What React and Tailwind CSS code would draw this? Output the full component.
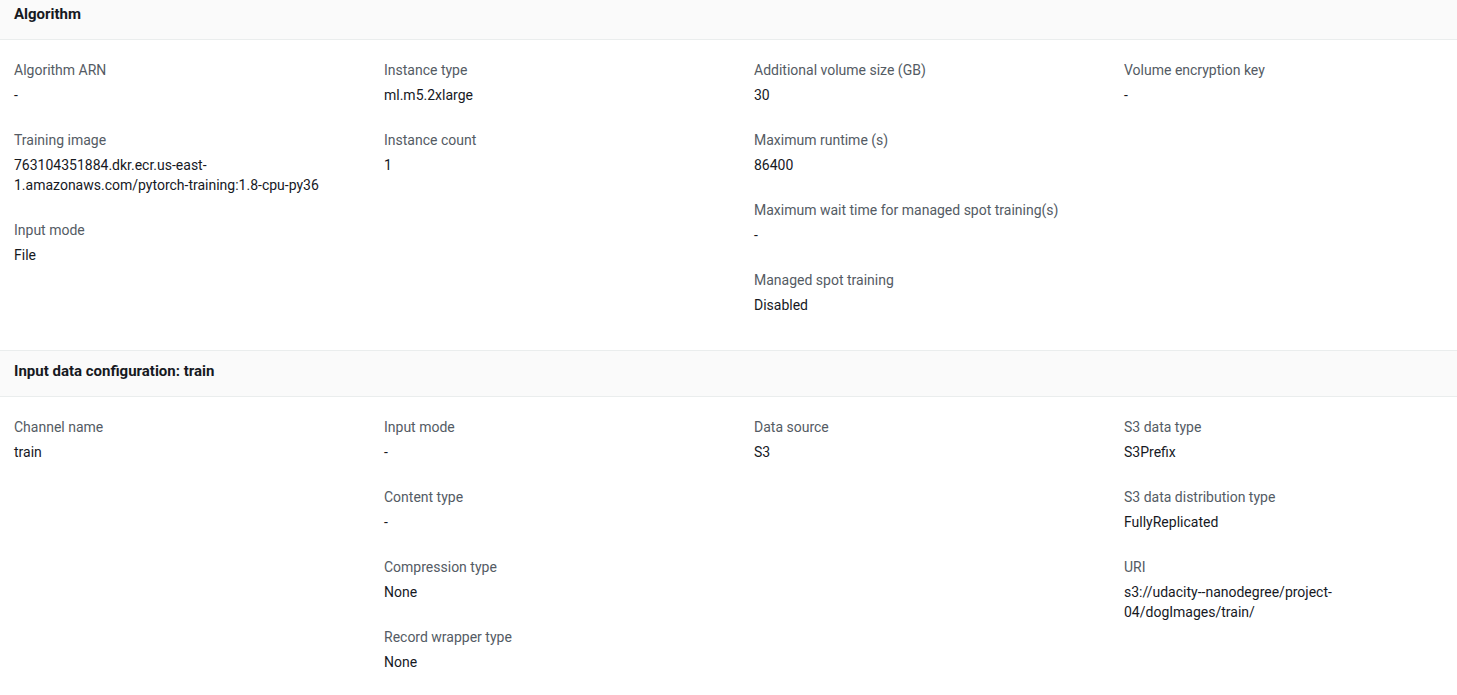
import React from "react";

const Item = ({ label, value }) => (
  <div className="mb-[25px]">
    <div className="text-[14px] leading-[20px] text-[#545b64]">{label}</div>
    <div className="mt-[5px] text-[14px] leading-[20px] text-[#16191f] break-words">{value}</div>
  </div>
);

const Section = ({ title, cols, first }) => (
  <section>
    <div className={`${first ? "-mt-[7px]" : ""} border-y border-[#eaeded] bg-[#fafafa] px-[14px] pt-[10px] pb-[15px]`}>
      <h2 className="text-[15px] leading-[20px] font-bold text-[#16191f]">{title}</h2>
    </div>
    <div className="grid grid-cols-[370px_370px_370px_1fr] pl-[14px] pt-[20px] pb-[10px]">
      {cols.map((col, i) => (
        <div key={i} className="pr-[30px]">
          {col.map(([l, v]) => (
            <Item key={l} label={l} value={v} />
          ))}
        </div>
      ))}
    </div>
  </section>
);

export default function App() {
  return (
    <div className="min-h-screen bg-white overflow-hidden" style={{ fontFamily: "Roboto, 'Liberation Sans', sans-serif" }}>
      <Section
        first
        title="Algorithm"
        cols={[
          [
            ["Algorithm ARN", "-"],
            ["Training image", "763104351884.dkr.ecr.us-east-1.amazonaws.com/pytorch-training:1.8-cpu-py36"],
            ["Input mode", "File"],
          ],
          [
            ["Instance type", "ml.m5.2xlarge"],
            ["Instance count", "1"],
          ],
          [
            ["Additional volume size (GB)", "30"],
            ["Maximum runtime (s)", "86400"],
            ["Maximum wait time for managed spot training(s)", "-"],
            ["Managed spot training", "Disabled"],
          ],
          [["Volume encryption key", "-"]],
        ]}
      />
      <Section
        title="Input data configuration: train"
        cols={[
          [["Channel name", "train"]],
          [
            ["Input mode", "-"],
            ["Content type", "-"],
            ["Compression type", "None"],
            ["Record wrapper type", "None"],
          ],
          [["Data source", "S3"]],
          [
            ["S3 data type", "S3Prefix"],
            ["S3 data distribution type", "FullyReplicated"],
            ["URI", "s3://udacity--nanodegree/project-04/dogImages/train/"],
          ],
        ]}
      />
    </div>
  );
}
